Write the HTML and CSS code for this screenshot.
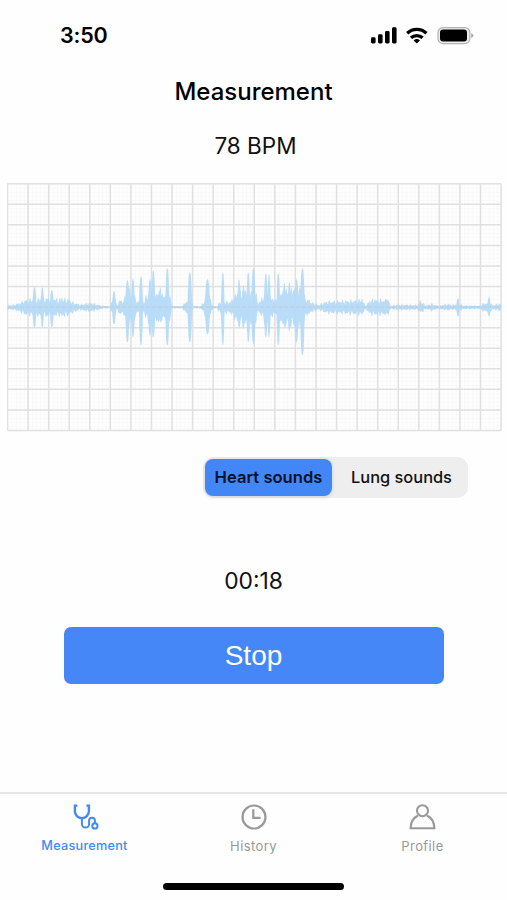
FILE: index.html
```html
<!DOCTYPE html>
<html lang="en">
<head>
<meta charset="utf-8">
<title>Measurement</title>
<link rel="stylesheet" href="styles.css">
</head>
<body>
<div class="app">
  <header class="status">
    <span class="time">3:50</span>
    <svg class="status-icons" viewBox="370 24 104 20" aria-hidden="true">
      <rect x="371" y="36.3" width="4.6" height="6.2" rx="1.4"/>
      <rect x="378" y="33.3" width="4.6" height="9.2" rx="1.4"/>
      <rect x="385" y="30" width="4.6" height="12.5" rx="1.4"/>
      <rect x="392" y="26.3" width="4.6" height="16.2" rx="1.4"/>
      <g fill="none" stroke="#000" stroke-width="3.3">
        <path d="M407.2 32.2a14 14 0 0 1 19.2 0"/>
        <path d="M411 36.8a8.6 8.6 0 0 1 11.6 0"/>
      </g>
      <path d="M413.6 39.4a5 5 0 0 1 6.4 0l-3.2 3.2z"/>
      <rect x="438" y="26.6" width="31.8" height="16" rx="5" fill="#eee" stroke="#b5b5b5" stroke-width="1.3"/>
      <rect x="440" y="28.6" width="27" height="12" rx="3"/>
      <path d="M471.2 32.2q2.2.8 2.2 2.4t-2.2 2.4z" fill="#aaa"/>
    </svg>
  </header>
  <h1>Measurement</h1>
  <p class="bpm">78 BPM</p>
  <svg class="chart" viewBox="7 183 495 249" aria-hidden="true">
    <defs>
      <pattern id="minor" x="7.5" y="183.7" width="4.113" height="4.113" patternUnits="userSpaceOnUse">
        <path d="M0 0H4.2M0 0V4.2" stroke="#f7f7f7" stroke-width="1.2" fill="none"/>
      </pattern>
    </defs>
    <rect x="7.5" y="183.7" width="493.5" height="246.8" fill="url(#minor)"/>
    <path id="grid" fill="none" stroke="#e0e0e0" stroke-width="1.5"/>
    <path id="wave" fill="#b3daf7" fill-opacity=".92"/>
    <path d="M8 307.2H501" stroke="#c9c9c9" stroke-width="1.2" stroke-dasharray="4 2" stroke-opacity=".75"/>
  </svg>
  <div class="segments">
    <button class="segment selected">Heart sounds</button>
    <button class="segment">Lung sounds</button>
  </div>
  <p class="timer">00:18</p>
  <button class="stop">Stop</button>
  <nav class="tabs">
    <a class="tab active">
      <svg viewBox="0 0 28 28" fill="none" stroke="currentColor" stroke-width="2">
        <path d="M6.4 2.6H3.9V8.2a7 7 0 0 0 14 0V2.6H15.4" stroke-width="2.4"/>
        <path d="M10.9 15.2V21a3.6 3.6 0 0 0 7.2 0V17.6a2.9 2.9 0 0 1 5.8 0V20"/>
        <circle cx="23.9" cy="22.9" r="2.6"/>
      </svg>
      <span>Measurement</span>
    </a>
    <a class="tab">
      <svg viewBox="0 0 28 28" fill="none" stroke="currentColor" stroke-width="2.2">
        <circle cx="14" cy="14" r="11.5"/>
        <path d="M13.3 6.3V14.8H20.6"/>
      </svg>
      <span>History</span>
    </a>
    <a class="tab">
      <svg viewBox="0 0 28 28" fill="none" stroke="currentColor" stroke-width="2.1">
        <circle cx="13.5" cy="7.7" r="5.5"/>
        <path d="M9.1 12.5C4.6 14.6 1.8 19 1.6 25.3H25.4C25.2 19 22.4 14.6 17.9 12.5"/>
      </svg>
      <span>Profile</span>
    </a>
  </nav>
  <div class="home"></div>
</div>
<script src="wave.js"></script>
</body>
</html>
```
FILE: styles.css
```css
* { box-sizing: border-box; }
body {
  margin: 0;
  background: #fefefe;
  color: #111;
  font-family: Inter, "Liberation Sans", sans-serif;
}
button { border: 0; padding: 0; background: none; color: inherit; font: inherit; }
.app {
  width: 507px;
  height: 900px;
  display: flex;
  flex-direction: column;
  align-items: center;
  overflow: hidden;
}
.status {
  width: 100%;
  height: 69px;
  padding: 0 33px 0 60px;
  display: flex;
  align-items: center;
  justify-content: space-between;
}
.time { font-size: 21.5px; font-weight: 600; letter-spacing: -.2px; color: #000; }
.status-icons { width: 104px; height: 20px; }
h1 {
  margin: 7px 0 0;
  font-size: 24px;
  line-height: 32px;
  font-weight: 500;
  color: #000;
}
.bpm { margin: 24px 0 0; padding-left: 4px; font-size: 22.5px; line-height: 28px; }
.chart { width: 495px; height: 249px; margin: 23px 0 0 2px; flex: none; }
.segments {
  width: 265px;
  height: 41px;
  margin: 25px 39px 0 0;
  align-self: flex-end;
  padding: 2px;
  display: flex;
  border-radius: 11px;
  background: #eee;
}
.segment { flex: 1; padding: 0 0 1px 5px; font-size: 16.4px; font-weight: 500; border-radius: 8px; }
.segment.selected {
  flex: 0 0 127px;
  padding-left: 0;
  background: #4387f7;
  font-weight: 600;
  font-size: 16.6px;
  color: #071226;
  box-shadow: 0 1px 4px #0002;
}
.timer { margin: 68px 0 0; font-size: 22.8px; line-height: 30px; }
.stop {
  width: 380px;
  height: 57px;
  margin-top: 31px;
  border-radius: 7px;
  background: #4587f7;
  color: #fff;
  font: 28px "Liberation Sans", sans-serif;
}
.tabs {
  width: 100%;
  height: 75px;
  margin-top: 108px;
  padding-top: 9px;
  border-top: 2px solid #e6e6e6;
  display: flex;
}
.tab {
  flex: 1;
  display: flex;
  flex-direction: column;
  align-items: center;
  gap: 6px;
  color: #999;
  font-size: 13px;
  line-height: 18px;
  letter-spacing: .4px;
}
.tab svg { width: 28px; height: 28px; }
.tab.active { color: #438af3; font-size: 12.7px; letter-spacing: .25px; font-weight: 500; }
.home { width: 181px; height: 7px; margin-top: 16px; border-radius: 4px; background: #000; }
```
FILE: wave.js
```js
const BASE = 307.3;
const LEFT = 7.5, TOP = 183.7, CELL = 20.565;

let grid = "";
for (let i = 0; i <= 24; i++) grid += `M${LEFT + i * CELL} ${TOP}v${CELL * 12}`;
for (let i = 0; i <= 12; i++) grid += `M${LEFT} ${TOP + i * CELL}h${CELL * 24}`;
document.getElementById("grid").setAttribute("d", grid);

// Background envelope: [x, amplitude]
const envelope = [
  [7, 2], [15, 3], [20, 5], [25, 8], [35, 9], [47, 10], [56, 9], [68, 9], [74, 5],
  [80, 3], [90, 5], [98, 3], [103, 1.5], [110, 1], [113, 10], [117, 3], [120, 8],
  [124, 7], [126, 20], [134, 20], [137, 4], [140, 12], [144, 6], [148, 17],
  [156, 17], [162, 13], [170, 14], [172, 1.2], [182, 1.2], [185, 5], [188, 9], [192, 8], [193, 1.2],
  [201, 1.2], [205, 9], [211, 8], [213, 1.2], [217, 1.2], [221, 8], [227, 6], [230, 6],
  [234, 11], [238, 18], [248, 21], [256, 15], [258, 5], [261, 8], [265, 17],
  [270, 17], [274, 6], [277, 14], [284, 18], [298, 19], [304, 15], [308, 6],
  [315, 4.5], [318, 2.5], [327, 6.5], [345, 7], [361, 8], [366, 2], [370, 8], [388, 8],
  [391, 1.5], [396, 3], [405, 3], [417, 2.5], [421, 6], [426, 2], [432, 4], [437, 1.8],
  [448, 3.5], [454, 2.5], [458, 5], [463, 2], [479, 1.8], [483, 4], [489, 5], [493, 2.5], [501, 4]
];

// Spikes: [x, rise, drop, half width]
const spikes = [
  [34.5, 20, 20, 2], [42.3, 20, 20, 1.7], [51.8, 17, 20, 2], [62, 10, 9, 1],
  [114, 16, 17, 2], [127.4, 27, 35, 2.2], [133, 29, 30, 1.8], [141, 31, 38, 2],
  [150, 28, 28, 2], [153.3, 37, 30, 2], [160.3, 20, 15, 1.4], [167.3, 39, 38, 2.1],
  [189.8, 35, 35, 2.3], [207.5, 28, 27, 2.6], [222.8, 35, 38, 1.8], [239, 28, 20, 1.6],
  [243.4, 22, 21, 1.5], [248.3, 35, 35, 1.8], [253.4, 39, 37, 2.2], [265.8, 34, 30, 1.8],
  [269, 33, 30, 1.6], [278.3, 34, 38, 1.8], [284.4, 24, 20, 1.5], [289.3, 25, 24, 1.5],
  [293.5, 17, 16, 1.5], [296.5, 28, 35, 2.2], [302.4, 39, 48, 2.4], [309, 8, 7, 1.2],
  [362, 8, 7, 1.3], [375, 8, 7, 1], [387, 8, 6, 1.2], [420, 7, 4, 1.2],
  [458, 9, 9, 1.6], [489, 10, 9, 1.7]
];

function ambient(x) {
  for (let i = 1; i < envelope.length; i++) {
    const [x0, a0] = envelope[i - 1], [x1, a1] = envelope[i];
    if (x <= x1) return a0 + (a1 - a0) * (x - x0) / (x1 - x0);
  }
  return 2;
}

function height(x, side) {
  const ripple = 0.8 + 0.34 * Math.sin(x * 1.9 + side) * Math.cos(x * 0.43);
  let h = ambient(x) * ripple;
  for (const s of spikes) {
    const d = Math.abs(x - s[0]) / s[3];
    if (d < 1) h = Math.max(h, s[side] * (1 - d ** 3));
  }
  return h;
}

const upper = [], lower = [];
for (let x = 7.5; x <= 501; x += 0.5) {
  upper.push(`${x} ${(BASE - height(x, 1)).toFixed(1)}`);
  lower.unshift(`${x} ${(BASE + height(x, 2)).toFixed(1)}`);
}
document.getElementById("wave").setAttribute("d", `M${upper.concat(lower).join("L")}Z`);
```
